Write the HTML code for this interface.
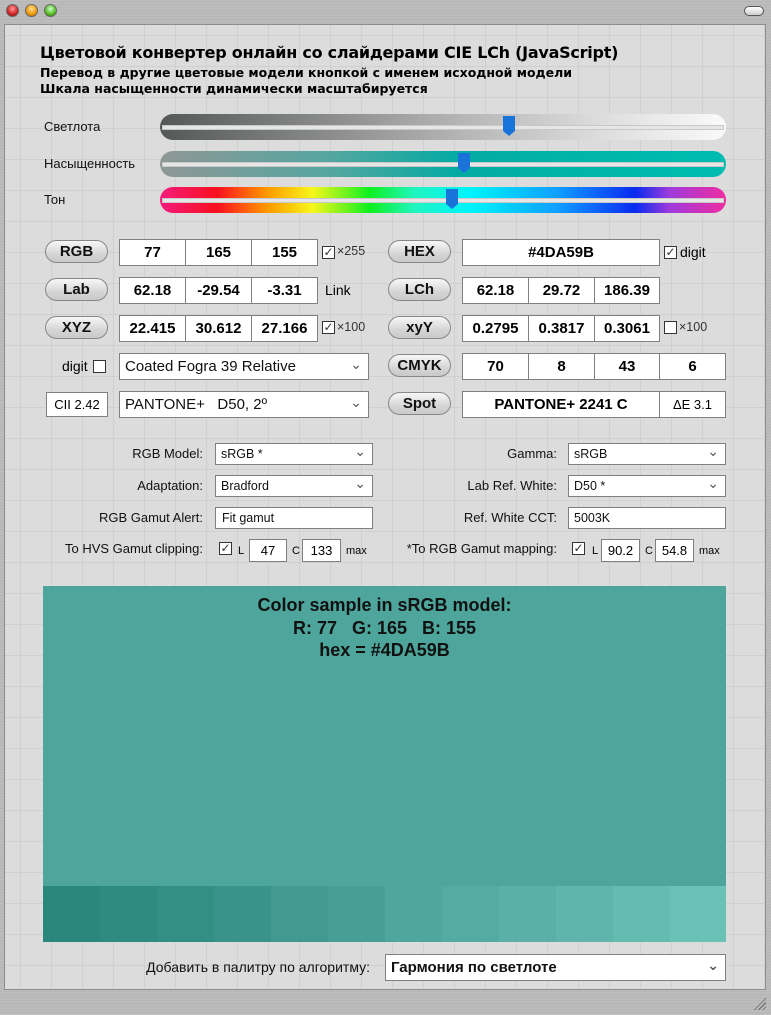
<!DOCTYPE html>
<html><head><meta charset="utf-8">
<style>
*{box-sizing:border-box;margin:0;padding:0}
body{width:771px;height:1015px;position:relative;overflow:hidden;font-family:"Liberation Sans","DejaVu Sans",sans-serif;background:linear-gradient(#bdbdbd,#a9a9a9);}
.frame{position:absolute;left:0;top:0;width:771px;height:1015px;background:repeating-linear-gradient(0deg,#b4b4b4 0,#c6c6c6 1px,#b0b0b0 2px,#bcbcbc 3px);}
.content{position:absolute;left:4px;top:24px;width:762px;height:966px;background-color:#dddcdd;border:1px solid #8c8c8c;
background-image:linear-gradient(#d0d0d0 1px,transparent 1px),linear-gradient(90deg,#d0d0d0 1px,transparent 1px);background-size:31px 31px;background-position:15px 10px;}
.a{position:absolute}
.lights span{position:absolute;top:4px;width:13px;height:13px;border-radius:50%;border:1px solid #666}
.t1{font-family:"DejaVu Sans",sans-serif;font-weight:bold;font-size:16px;letter-spacing:-0.25px;left:40px;top:43px;color:#000}
.t2{font-family:"DejaVu Sans",sans-serif;font-weight:bold;font-size:12.5px;left:40px;color:#000}
.lbl{font-size:13px;color:#111}
.slider{position:absolute;left:160px;width:566px;height:26px;border-radius:13px}
.slider:after{content:"";position:absolute;left:2px;right:2px;top:11px;height:3px;background:#e6e6e6;border:1px solid #c8c8c8}
.thumb{position:absolute;width:12px;height:20px;background:#1a73d9;top:2px;z-index:2;clip-path:polygon(0 0,100% 0,100% 75%,50% 100%,0 75%)}
.btn{position:absolute;width:63px;height:23px;border-radius:12px;border:1px solid #888;background:linear-gradient(#f7f7f7,#d6d6d6 60%,#c9c9c9);font-weight:bold;font-size:15px;text-align:center;line-height:21px;color:#111}
.cell{position:absolute;height:27px;background:#fff;border:1px solid #808080;font-weight:bold;font-size:15px;text-align:center;line-height:25px;color:#000}
.sel{position:absolute;background:#fff;border:1px solid #808080;font-size:15px;padding-left:5px;color:#111;white-space:nowrap}
.sel:after{content:"⌄";position:absolute;right:6px;top:50%;margin-top:-12px;font-size:14px;line-height:18px;color:#555}
.sel.nodd:after{content:none}
.small{font-size:12.5px}
.cb{position:absolute;width:13px;height:13px;border:1px solid #333;background:#fff;font-size:12px;line-height:11px;text-align:center;color:#333}
.rl{position:absolute;font-size:13px;text-align:right;color:#111;white-space:nowrap}
.sw{position:absolute;top:886px;height:56px;width:57px}
</style></head><body>
<div class="frame"></div>
<div class="lights">
<span style="left:6px;background:radial-gradient(circle at 50% 35%,#f99,#c22 60%,#800)"></span>
<span style="left:25px;background:radial-gradient(circle at 50% 35%,#fd9,#e90 60%,#a50)"></span>
<span style="left:44px;background:radial-gradient(circle at 50% 35%,#cfc,#5b2 60%,#260)"></span>
</div>
<div class="a" style="left:744px;top:6px;width:20px;height:10px;border-radius:5px;border:1px solid #555;background:linear-gradient(#fff,#ccc)"></div>
<div class="content"></div>

<div class="a t1">Цветовой конвертер онлайн со слайдерами CIE LCh (JavaScript)</div>
<div class="a t2" style="top:65px">Перевод в другие цветовые модели кнопкой с именем исходной модели</div>
<div class="a t2" style="top:81px">Шкала насыщенности динамически масштабируется</div>

<div class="a lbl" style="left:44px;top:119px">Светлота</div>
<div class="a lbl" style="left:44px;top:156px">Насыщенность</div>
<div class="a lbl" style="left:44px;top:192px">Тон</div>
<div class="slider" style="top:114px;background:linear-gradient(90deg,#555858,#8a8d8c 30%,#b7b9b8 55%,#dcdddd 78%,#fafafa)"><div class="thumb" style="left:343px"></div></div>
<div class="slider" style="top:151px;background:linear-gradient(90deg,#8e9796,#55a6a0 30%,#05aaa2 52%,#00b5aa 75%,#00bcb0)"><div class="thumb" style="left:298px"></div></div>
<div class="slider" style="top:187px;background:linear-gradient(90deg,#f41c7c,#f80f20 10%,#ff9a00 19%,#f7f71a 27%,#0ef020 37%,#20f5c0 45%,#00f4ff 55%,#10a0ff 70%,#0a2af0 84%,#9d3bdb 90%,#ef2da0)"><div class="thumb" style="left:286px"></div></div>

<div class="btn" style="left:45px;top:240px">RGB</div>
<div class="cell" style="left:119px;top:239px;width:67px">77</div>
<div class="cell" style="left:185px;top:239px;width:67px">165</div>
<div class="cell" style="left:251px;top:239px;width:67px">155</div>
<div class="cb" style="left:322px;top:246px">✓</div><div class="a small" style="left:337px;top:244px;color:#333">×255</div>
<div class="btn" style="left:388px;top:240px">HEX</div>
<div class="cell" style="left:462px;top:239px;width:198px">#4DA59B</div>
<div class="cb" style="left:664px;top:246px">✓</div><div class="a" style="left:680px;top:244px;font-size:14px">digit</div>

<div class="btn" style="left:45px;top:278px">Lab</div>
<div class="cell" style="left:119px;top:277px;width:67px">62.18</div>
<div class="cell" style="left:185px;top:277px;width:67px">-29.54</div>
<div class="cell" style="left:251px;top:277px;width:67px">-3.31</div>
<div class="a" style="left:325px;top:282px;font-size:14px">Link</div>
<div class="btn" style="left:388px;top:278px">LCh</div>
<div class="cell" style="left:462px;top:277px;width:67px">62.18</div>
<div class="cell" style="left:528px;top:277px;width:67px">29.72</div>
<div class="cell" style="left:594px;top:277px;width:66px">186.39</div>

<div class="btn" style="left:45px;top:316px">XYZ</div>
<div class="cell" style="left:119px;top:315px;width:67px">22.415</div>
<div class="cell" style="left:185px;top:315px;width:67px">30.612</div>
<div class="cell" style="left:251px;top:315px;width:67px">27.166</div>
<div class="cb" style="left:322px;top:321px">✓</div><div class="a small" style="left:337px;top:320px;color:#333">×100</div>
<div class="btn" style="left:388px;top:316px">xyY</div>
<div class="cell" style="left:462px;top:315px;width:67px">0.2795</div>
<div class="cell" style="left:528px;top:315px;width:67px">0.3817</div>
<div class="cell" style="left:594px;top:315px;width:66px">0.3061</div>
<div class="cb" style="left:664px;top:321px"></div><div class="a small" style="left:679px;top:320px;color:#333">×100</div>

<div class="a" style="left:62px;top:358px;font-size:14px">digit</div><div class="cb" style="left:93px;top:360px"></div>
<div class="sel" style="left:119px;top:353px;width:250px;height:27px;line-height:25px">Coated Fogra 39 Relative</div>
<div class="btn" style="left:388px;top:354px">CMYK</div>
<div class="cell" style="left:462px;top:353px;width:67px">70</div>
<div class="cell" style="left:528px;top:353px;width:67px">8</div>
<div class="cell" style="left:594px;top:353px;width:66px">43</div>
<div class="cell" style="left:659px;top:353px;width:67px">6</div>

<div class="cell" style="left:46px;top:392px;width:62px;height:25px;font-weight:normal;font-size:13px;line-height:23px">CII 2.42</div>
<div class="sel" style="left:119px;top:391px;width:250px;height:27px;line-height:25px">PANTONE+ &nbsp; D50, 2º</div>
<div class="btn" style="left:388px;top:392px">Spot</div>
<div class="cell" style="left:462px;top:391px;width:198px">PANTONE+ 2241 C</div>
<div class="cell" style="left:659px;top:391px;width:67px;font-weight:normal;font-size:13px">ΔE 3.1</div>

<div class="rl" style="left:60px;width:143px;top:446px">RGB Model:</div>
<div class="sel small" style="left:215px;top:443px;width:158px;height:22px;line-height:20px">sRGB *</div>
<div class="rl" style="left:60px;width:143px;top:478px">Adaptation:</div>
<div class="sel small" style="left:215px;top:475px;width:158px;height:22px;line-height:20px">Bradford</div>
<div class="rl" style="left:60px;width:143px;top:510px">RGB Gamut Alert:</div>
<div class="sel small nodd" style="left:215px;top:507px;width:158px;height:22px;line-height:20px;padding-left:6px">Fit gamut</div>
<div class="rl" style="left:40px;width:163px;top:541px">To HVS Gamut clipping:</div>
<div class="cb" style="left:219px;top:542px">✓</div><div class="a" style="left:238px;top:545px;font-size:11px">L</div>
<div class="cell" style="left:249px;top:539px;width:38px;height:23px;font-weight:normal;font-size:13px;line-height:21px">47</div>
<div class="a" style="left:292px;top:545px;font-size:11px">C</div>
<div class="cell" style="left:302px;top:539px;width:39px;height:23px;font-weight:normal;font-size:13px;line-height:21px">133</div>
<div class="a" style="left:346px;top:545px;font-size:11px">max</div>

<div class="rl" style="left:400px;width:157px;top:446px">Gamma:</div>
<div class="sel small" style="left:568px;top:443px;width:158px;height:22px;line-height:20px">sRGB</div>
<div class="rl" style="left:400px;width:157px;top:478px">Lab Ref. White:</div>
<div class="sel small" style="left:568px;top:475px;width:158px;height:22px;line-height:20px">D50 *</div>
<div class="rl" style="left:400px;width:157px;top:510px">Ref. White CCT:</div>
<div class="sel small nodd" style="left:568px;top:507px;width:158px;height:22px;line-height:20px">5003K</div>
<div class="rl" style="left:380px;width:177px;top:541px">*To RGB Gamut mapping:</div>
<div class="cb" style="left:572px;top:542px">✓</div><div class="a" style="left:592px;top:545px;font-size:11px">L</div>
<div class="cell" style="left:601px;top:539px;width:39px;height:23px;font-weight:normal;font-size:13px;line-height:21px">90.2</div>
<div class="a" style="left:645px;top:545px;font-size:11px">C</div>
<div class="cell" style="left:655px;top:539px;width:39px;height:23px;font-weight:normal;font-size:13px;line-height:21px">54.8</div>
<div class="a" style="left:699px;top:545px;font-size:11px">max</div>

<div class="a" style="left:43px;top:586px;width:683px;height:356px;background:#4da59b"></div>
<div class="a" style="left:43px;top:594px;width:683px;text-align:center;font-weight:bold;font-size:18px;line-height:22.5px;color:#111">Color sample in sRGB model:<br>R: 77 &nbsp; G: 165 &nbsp; B: 155<br>hex = #4DA59B</div>
<div class="sw" style="left:43px;background:#29877c"></div>
<div class="sw" style="left:100px;background:#2d8b80"></div>
<div class="sw" style="left:157px;background:#338f84"></div>
<div class="sw" style="left:214px;background:#39938a"></div>
<div class="sw" style="left:271px;background:#41998f"></div>
<div class="sw" style="left:328px;background:#479e94"></div>
<div class="sw" style="left:385px;background:#4ea69c"></div>
<div class="sw" style="left:442px;background:#54aba1"></div>
<div class="sw" style="left:499px;background:#5ab0a6"></div>
<div class="sw" style="left:556px;background:#5fb5ab"></div>
<div class="sw" style="left:613px;background:#64bbb0"></div>
<div class="sw" style="left:670px;width:56px;background:#6ac1b6"></div>

<div class="rl" style="left:100px;width:270px;top:959px;font-size:14px">Добавить в палитру по алгоритму:</div>
<div class="sel" style="left:385px;top:954px;width:341px;height:27px;line-height:25px;font-weight:bold;font-size:15px">Гармония по светлоте</div>
<div class="a" style="left:752px;top:996px;width:14px;height:14px;background:repeating-linear-gradient(135deg,transparent 0,transparent 2px,#666 2px,#666 3px);clip-path:polygon(100% 0,100% 100%,0 100%)"></div>
</body></html>
